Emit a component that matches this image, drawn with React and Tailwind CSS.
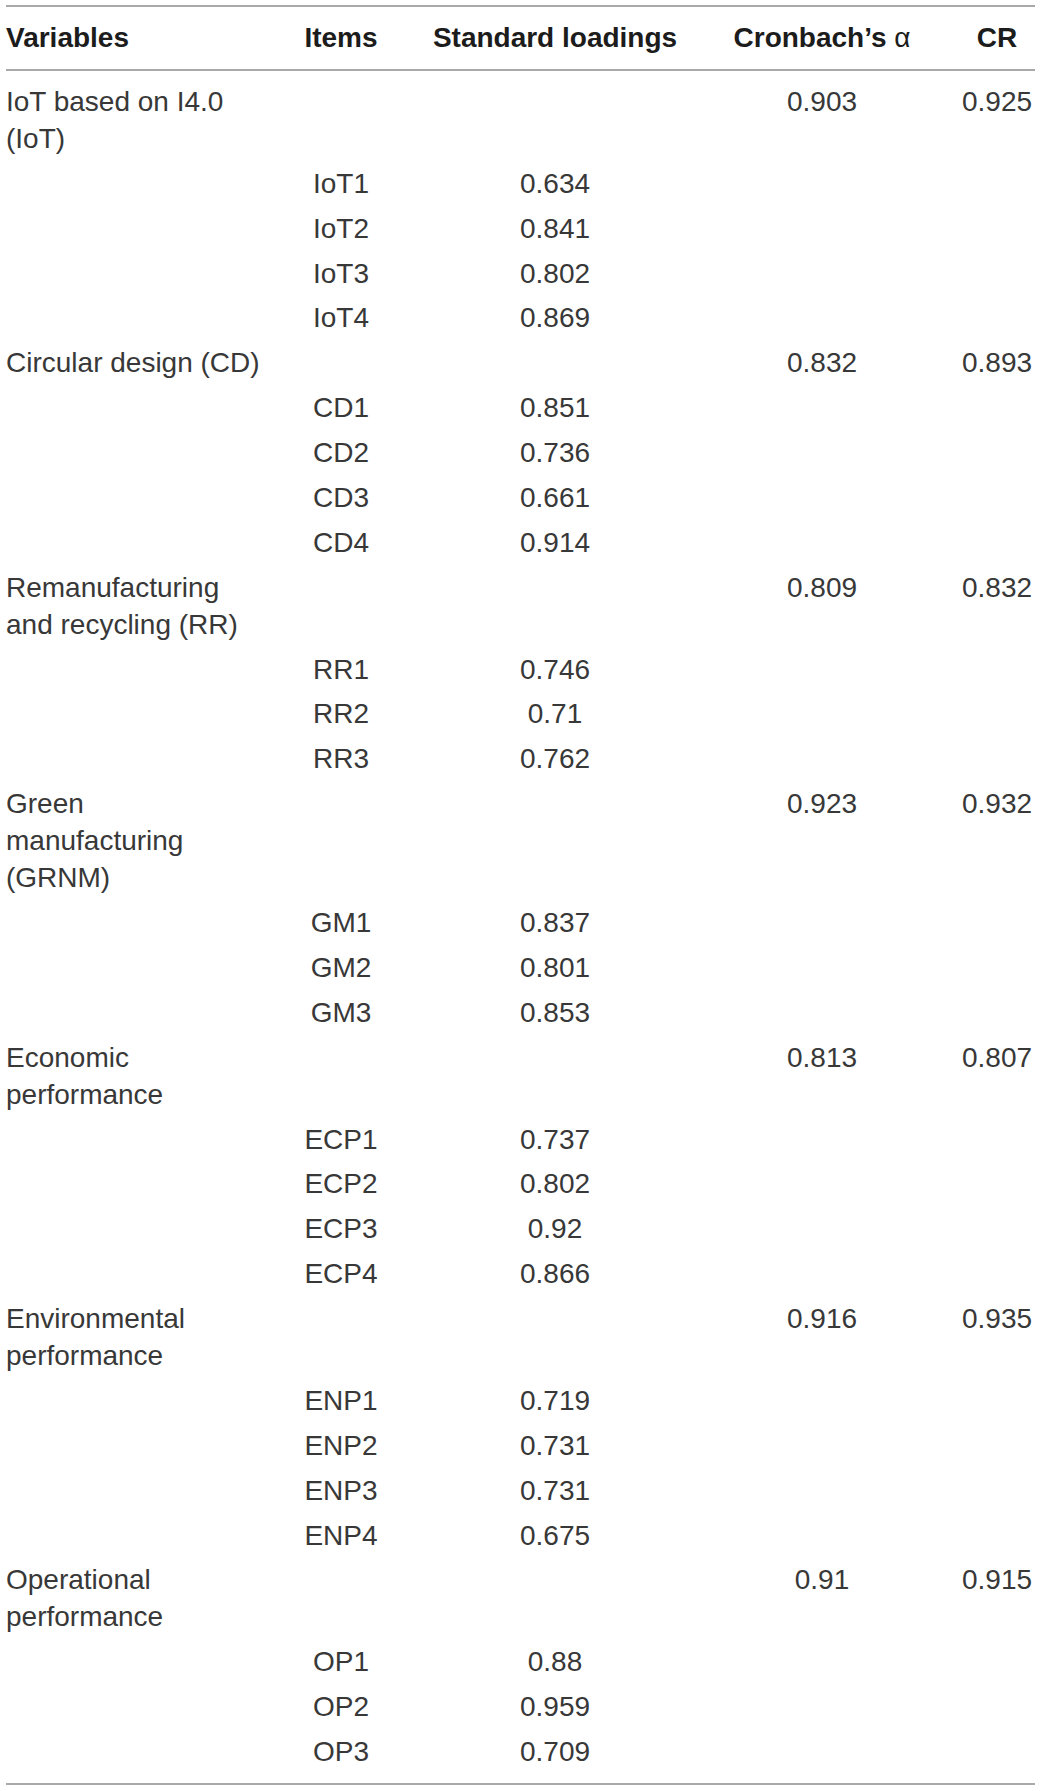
import React from 'react';

const groups = [
  { name: 'IoT based on I4.0 (IoT)', alpha: '0.903', cr: '0.925', items: [['IoT1', '0.634'], ['IoT2', '0.841'], ['IoT3', '0.802'], ['IoT4', '0.869']] },
  { name: 'Circular design (CD)', alpha: '0.832', cr: '0.893', items: [['CD1', '0.851'], ['CD2', '0.736'], ['CD3', '0.661'], ['CD4', '0.914']] },
  { name: 'Remanufacturing and recycling (RR)', alpha: '0.809', cr: '0.832', items: [['RR1', '0.746'], ['RR2', '0.71'], ['RR3', '0.762']] },
  { name: 'Green manufacturing (GRNM)', alpha: '0.923', cr: '0.932', items: [['GM1', '0.837'], ['GM2', '0.801'], ['GM3', '0.853']] },
  { name: 'Economic performance', alpha: '0.813', cr: '0.807', items: [['ECP1', '0.737'], ['ECP2', '0.802'], ['ECP3', '0.92'], ['ECP4', '0.866']] },
  { name: 'Environmental performance', alpha: '0.916', cr: '0.935', items: [['ENP1', '0.719'], ['ENP2', '0.731'], ['ENP3', '0.731'], ['ENP4', '0.675']] },
  { name: 'Operational performance', alpha: '0.91', cr: '0.915', items: [['OP1', '0.88'], ['OP2', '0.959'], ['OP3', '0.709']] },
];

const cols = 'grid grid-cols-[279px_112px_316px_218px_104px]';

const Row = ({ name, item, loading, alpha, cr }) => (
  <div className={`${cols} py-[3.94px]`}>
    <div className="max-w-[258px]">{name}</div>
    <div className="text-center">{item}</div>
    <div className="text-center">{loading}</div>
    <div className="text-center">{alpha}</div>
    <div className="text-center pl-[28px]">{cr}</div>
  </div>
);

export default function App() {
  return (
    <div className="bg-white w-[1040px] min-h-[1791px] pt-[5px] font-['Liberation_Sans',Arial,sans-serif] text-[28px] leading-[37px] text-[#383838]">
      <div className="ml-[6px] w-[1029px] border-t-2 border-b-2 border-[#a9a9a9]">
        <div className={`${cols} pt-[12px] pb-[13px] border-b-2 border-[#a9a9a9] font-bold text-[#1c1c1c]`}>
          <div>Variables</div>
          <div className="text-center">Items</div>
          <div className="text-center">Standard loadings</div>
          <div className="text-center">Cronbach’s <span className="font-normal">α</span></div>
          <div className="text-center pl-[28px]">CR</div>
        </div>
        <div className="pt-[8px] pb-[9px]">
          {groups.map((g) => (
            <React.Fragment key={g.name}>
              <Row name={g.name} alpha={g.alpha} cr={g.cr} />
              {g.items.map(([item, loading]) => (
                <Row key={item} item={item} loading={loading} />
              ))}
            </React.Fragment>
          ))}
        </div>
      </div>
    </div>
  );
}
